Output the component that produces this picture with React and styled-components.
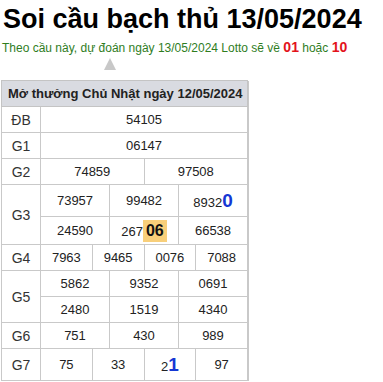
import styled, { createGlobalStyle } from "styled-components";

const GlobalStyle = createGlobalStyle`
  body {
    margin: 0;
    background: #fff;
    font-family: "Liberation Sans", Arial, sans-serif;
    color: #222;
  }
`;

const results = {
  title: "Mở thưởng Chủ Nhật ngày 12/05/2024",
};

const App = () => {
  return (
    <Page>
      <GlobalStyle />
      <Title>Soi cầu bạch thủ 13/05/2024</Title>
      <Predict>
        Theo cầu này, dự đoán ngày 13/05/2024 Lotto sẽ về <Red>01</Red> hoặc{" "}
        <Red>10</Red>
      </Predict>
      <Arrow />
      <Table>
        <colgroup>
          <col style={{ width: 39 }} />
          {Array.from({ length: 12 }).map((_, i) => (
            <col key={i} />
          ))}
        </colgroup>
        <tbody>
          <tr>
            <HeadCell colSpan={13}>{results.title}</HeadCell>
          </tr>
          <tr>
            <Label>ĐB</Label>
            <Cell colSpan={12}>54105</Cell>
          </tr>
          <tr>
            <Label>G1</Label>
            <Cell colSpan={12}>06147</Cell>
          </tr>
          <tr>
            <Label>G2</Label>
            <Cell colSpan={6}>74859</Cell>
            <Cell colSpan={6}>97508</Cell>
          </tr>
          <tr>
            <Label rowSpan={2}>G3</Label>
            <Cell colSpan={4} $tall>73957</Cell>
            <Cell colSpan={4}>99482</Cell>
            <Cell colSpan={4}>
              8932<Blue>0</Blue>
            </Cell>
          </tr>
          <tr>
            <Cell colSpan={4} $mid>24590</Cell>
            <Cell colSpan={4}>
              267<Hit>06</Hit>
            </Cell>
            <Cell colSpan={4}>66538</Cell>
          </tr>
          <tr>
            <Label>G4</Label>
            <Cell colSpan={3}>7963</Cell>
            <Cell colSpan={3}>9465</Cell>
            <Cell colSpan={3}>0076</Cell>
            <Cell colSpan={3}>7088</Cell>
          </tr>
          <tr>
            <Label rowSpan={2}>G5</Label>
            <Cell colSpan={4}>5862</Cell>
            <Cell colSpan={4}>9352</Cell>
            <Cell colSpan={4}>0691</Cell>
          </tr>
          <tr>
            <Cell colSpan={4}>2480</Cell>
            <Cell colSpan={4}>1519</Cell>
            <Cell colSpan={4}>4340</Cell>
          </tr>
          <tr>
            <Label>G6</Label>
            <Cell colSpan={4}>751</Cell>
            <Cell colSpan={4}>430</Cell>
            <Cell colSpan={4}>989</Cell>
          </tr>
          <tr>
            <Label>G7</Label>
            <Cell colSpan={3} $tall>75</Cell>
            <Cell colSpan={3}>33</Cell>
            <Cell colSpan={3}>
              2<Blue>1</Blue>
            </Cell>
            <Cell colSpan={3}>97</Cell>
          </tr>
        </tbody>
      </Table>
    </Page>
  );
};

export default App;

const Page = styled.div`
  padding: 0 0 0 1px;
`;

const Title = styled.h1`
  margin: 0;
  padding: 4px 0 0 2px;
  font-size: 27px;
  line-height: 30px;
  font-weight: bold;
  color: #000;
  white-space: nowrap;
`;

const Predict = styled.div`
  padding: 5px 0 0 1px;
  font-size: 12px;
  line-height: 16px;
  color: #2f7d1e;
  white-space: nowrap;
`;

const Red = styled.b`
  color: #e3131b;
  font-size: 14px;
`;

const Arrow = styled.div`
  width: 0;
  height: 0;
  margin: 2px 0 10px 103px;
  border-left: 6px solid transparent;
  border-right: 6px solid transparent;
  border-bottom: 12px solid #c8c8c8;
`;

const Table = styled.table`
  width: 247px;
  border-collapse: collapse;
  table-layout: fixed;
  border: 1px solid #c4c4c4;
  box-shadow: 1px 1px 0 #c9c9c9;
`;

const HeadCell = styled.th`
  background: #d9dbe1;
  border: 1px solid #c4c4c4;
  text-align: left;
  padding: 0 0 0 6px;
  height: 25px;
  font-size: 13px;
  font-weight: bold;
  color: #222;
  white-space: nowrap;
`;

const Cell = styled.td`
  border: 1px solid #c9c9c9;
  text-align: center;
  padding: 0;
  height: ${(p) => (p.$tall ? "31px" : p.$mid ? "27px" : "25px")};
  font-size: 13px;
  color: #222;
`;

const Label = styled(Cell)`
  font-size: 14px;
  color: #333;
`;

const Blue = styled.b`
  color: #1537d4;
  font-size: 19px;
`;

const Hit = styled.b`
  display: inline-block;
  background: #f8cf7a;
  font-size: 16px;
  padding: 2px 3px;
  color: #111;
`;
